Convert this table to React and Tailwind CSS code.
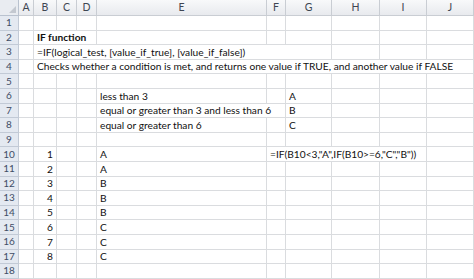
import React from "react";

const cols = ["A", "B", "C", "D", "E", "F", "G", "H", "I", "J"];

// each row: list of cells {c: start col index (1=A), s: span, t: text, r: right align, b: bold}
const rows = {
  2: [{ c: 2, s: 3, t: "IF function", b: true }],
  3: [{ c: 2, s: 6, t: "=IF(logical_test, [value_if_true], [value_if_false])" }],
  4: [{ c: 2, s: 9, t: "Checks whether a condition is met, and returns one value if TRUE, and another value if FALSE" }],
  6: [{ c: 5, s: 1, t: "less than 3" }, { c: 7, s: 1, t: "A" }],
  7: [{ c: 5, s: 2, t: "equal or greater than 3 and less than 6" }, { c: 7, s: 1, t: "B" }],
  8: [{ c: 5, s: 1, t: "equal or greater than 6" }, { c: 7, s: 1, t: "C" }],
  10: [{ c: 2, s: 1, t: "1", r: true }, { c: 5, s: 1, t: "A" }, { c: 6, s: 4, t: '=IF(B10<3,"A",IF(B10>=6,"C","B"))' }],
};

const results = ["A", "A", "B", "B", "B", "C", "C", "C"];
for (let i = 2; i <= 8; i++) {
  rows[9 + i] = [{ c: 2, s: 1, t: String(i), r: true }, { c: 5, s: 1, t: results[i - 1] }];
}

const spanClass = {
  1: "col-span-1",
  2: "col-span-2",
  3: "col-span-3",
  4: "col-span-4",
  6: "col-span-6",
  9: "col-span-9",
};

function buildRow(n) {
  const defs = rows[n] || [];
  const cells = [];
  let col = 1;
  while (col <= 10) {
    const d = defs.find((x) => x.c === col);
    if (d) {
      cells.push({ ...d, key: col });
      col += d.s;
    } else {
      cells.push({ c: col, s: 1, t: "", key: col });
      col += 1;
    }
  }
  return cells;
}

function Cell({ cell }) {
  return (
    <div
      className={`${spanClass[cell.s]} flex items-end whitespace-nowrap overflow-visible border-r border-b border-[#dadcdf] px-[3px] leading-[13px] ${
        cell.r ? "justify-end" : "justify-start"
      } ${cell.b ? "font-bold" : ""}`}
    >
      {cell.t}
    </div>
  );
}

export default function App() {
  const rowNums = Array.from({ length: 18 }, (_, i) => i + 1);

  return (
    <div
      className="w-[474px] h-[279px] overflow-hidden bg-white text-[10.2px] text-[#111]"
      style={{ fontFamily: "Lato, 'Open Sans', sans-serif" }}
    >
      <div className="grid grid-cols-[19px_15px_23px_20px_20px_170px_19px_46px_48px_47px_47px] grid-rows-[16px_repeat(18,14.6px)]">
        {/* corner */}
        <div className="relative bg-[#e9ecf1] border-r border-b border-[#b9c2cf]">
          <div className="absolute right-[2px] bottom-[2px] w-0 h-0 border-l-[7px] border-l-transparent border-b-[7px] border-b-[#c3c8d0]" />
        </div>
        {cols.map((c) => (
          <div
            key={c}
            className="flex items-center justify-center bg-gradient-to-b from-[#f8f9fa] to-[#e8eaee] border-r border-b border-[#c9cdd3] text-[#3e4652] text-[10.5px]"
          >
            {c}
          </div>
        ))}

        {rowNums.map((n) => (
          <React.Fragment key={n}>
            <div className="flex items-center justify-center bg-[#e4e9f1] border-r border-b border-[#c2cad6] text-[#3f4d66] text-[10px]">
              {n}
            </div>
            {buildRow(n).map((cell) => (
              <Cell key={cell.key} cell={cell} />
            ))}
          </React.Fragment>
        ))}
      </div>
    </div>
  );
}
